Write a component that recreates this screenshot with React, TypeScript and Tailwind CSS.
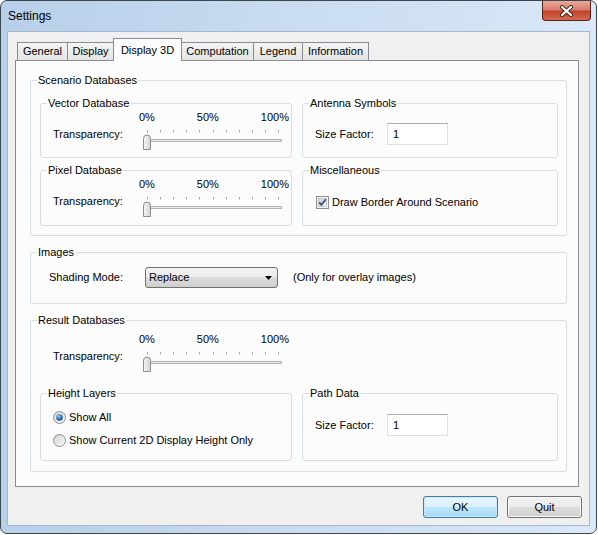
import type { ReactNode } from 'react'

const TICKS = Array.from({ length: 11 }, (_, i) => Math.round(8 + i * 13.1) + 0.5)

const TABS = [
  { label: 'General', w: 'w-[50px] border-l' },
  { label: 'Display', w: 'w-[46px] border-l' },
  { label: 'Display 3D', w: '', active: true },
  { label: 'Computation', w: 'w-[71px]' },
  { label: 'Legend', w: 'w-[49px] border-l' },
  { label: 'Information', w: 'w-[67px] border-x' },
]

function Group({ title, className = '', children }: { title: string; className?: string; children?: ReactNode }) {
  return (
    <fieldset className={`min-w-0 rounded-[3px] border border-[#d5dfe5] ${className}`}>
      <legend className="ml-[6px] px-px leading-[14px]">{title}</legend>
      {children}
    </fieldset>
  )
}

function Slider() {
  return (
    <div className="w-[150px]">
      <div className="flex h-[14px] justify-between leading-[14px]">
        <span>0%</span>
        <span>50%</span>
        <span>100%</span>
      </div>
      <svg width="150" height="28" viewBox="0 0 150 28" className="block">
        <defs>
          <linearGradient id="thumbFill" x1="0" y1="0" x2="1" y2="0">
            <stop offset="0" stopColor="#f6f6f6" />
            <stop offset="1" stopColor="#d4d4d4" />
          </linearGradient>
        </defs>
        {TICKS.map((x) => (
          <line key={x} x1={x} x2={x} y1="6" y2="8.5" stroke="#a8a8a8" />
        ))}
        <rect x="4.5" y="15.5" width="138" height="2" fill="#ececec" stroke="#b3b3b3" />
        <path d="M4.5 25.5 V14.5 A3.5 3.5 0 0 1 11.5 14.5 V25.5 Z" fill="url(#thumbFill)" stroke="#8c8c8c" />
      </svg>
    </div>
  )
}

function TextBox({ value }: { value: string }) {
  return (
    <div className="flex h-[22px] w-[61px] items-center border border-[#dbdfe6] border-t-[#abadb3] bg-white pl-[5px]">
      {value}
    </div>
  )
}

function Transparency({ pad }: { pad: string }) {
  return (
    <div className={`flex ${pad}`}>
      <span className="mt-[17px] w-[86px] leading-[14px]">Transparency:</span>
      <Slider />
    </div>
  )
}

function Checkbox() {
  return (
    <svg width="13" height="13" viewBox="0 0 13 13" className="block shrink-0">
      <defs>
        <linearGradient id="cbFill" x1="0" y1="0" x2="1" y2="1">
          <stop offset="0" stopColor="#cbcfd5" />
          <stop offset="1" stopColor="#f7f7f7" />
        </linearGradient>
      </defs>
      <rect x="0.5" y="0.5" width="12" height="12" fill="#f4f4f4" stroke="#8e8f8f" />
      <rect x="2.5" y="2.5" width="8" height="8" fill="url(#cbFill)" stroke="#aeb3b9" strokeWidth="0.6" />
      <path d="M3.2 6.4 L5.4 8.9 L9.8 3.2" fill="none" stroke="#3d4f7c" strokeWidth="1.8" />
    </svg>
  )
}

function Radio({ checked }: { checked?: boolean }) {
  return (
    <svg width="13" height="13" viewBox="0 0 13 13" className="block shrink-0">
      <defs>
        <linearGradient id="rdFill" x1="0" y1="0" x2="1" y2="1">
          <stop offset="0" stopColor="#cfd2d6" />
          <stop offset="1" stopColor="#f8f8f8" />
        </linearGradient>
        <radialGradient id="rdDot" cx="0.4" cy="0.35" r="0.7">
          <stop offset="0" stopColor="#a3d5f7" />
          <stop offset="0.5" stopColor="#2f84c8" />
          <stop offset="1" stopColor="#0d3f73" />
        </radialGradient>
      </defs>
      <circle cx="6.5" cy="6.5" r="6" fill="url(#rdFill)" stroke="#8e8f8f" />
      {checked && <circle cx="6.5" cy="6.5" r="3.2" fill="url(#rdDot)" />}
    </svg>
  )
}

function CloseButton() {
  return (
    <div className="mr-[5px] flex h-[20px] w-[49px] items-center justify-center rounded-b-[4px] border border-t-0 border-[#5b2216] bg-[linear-gradient(#e9a99b,#d7806f_45%,#c4432a_55%,#d26a55)]">
      <svg width="15" height="12" viewBox="0 0 15 12">
        <path d="M3 2 L12 10 M12 2 L3 10" stroke="#3a2620" strokeWidth="4" strokeLinecap="round" />
        <path d="M3 2 L12 10 M12 2 L3 10" stroke="#ffffff" strokeWidth="2.2" strokeLinecap="round" />
      </svg>
    </div>
  )
}

export default function App() {
  return (
    <div className="h-[535px] w-[598px] bg-white font-['Liberation_Sans',Arial,sans-serif] text-[11px] text-black">
      <div className="flex h-[534px] w-[597px] flex-col rounded-[7px] border border-[#3c4650] bg-[linear-gradient(90deg,#b7cfe9,#c9dcf1_50%,#dae8f7)]">
        {/* title bar */}
        <div className="flex h-[30px] justify-between">
          <span className="self-center pl-[7px] text-[12px]">Settings</span>
          <CloseButton />
        </div>

        {/* client */}
        <div className="mx-[6px] h-[495px] border border-[#a3b8cf] bg-[#f0f0f0]">
          <div className="ml-[9px] mt-[6px] flex h-[22px] items-end">
            {TABS.map((t) =>
              t.active ? (
                <div
                  key={t.label}
                  className="relative z-10 -mb-px flex h-[23px] w-[69px] justify-center border-x border-t border-[#898c95] bg-[#fcfcfc] pt-[4px] leading-[14px]"
                >
                  {t.label}
                </div>
              ) : (
                <div
                  key={t.label}
                  className={`flex h-[18px] items-center justify-center border-t border-[#898c95] bg-[linear-gradient(#f4f4f4,#e4e4e4)] ${t.w}`}
                >
                  {t.label}
                </div>
              ),
            )}
          </div>

          {/* tab page */}
          <div className="ml-[7px] flex h-[427px] w-[564px] flex-col gap-[9px] border border-[#898c95] bg-[#fcfcfc] pl-[14px] pt-[12px]">
            <Group title="Scenario Databases" className="h-[163px] w-[537px]">
              <div className="ml-[9px] mt-[9px] grid grid-cols-[252px_256px] gap-x-[10px] gap-y-[5px]">
                <Group title="Vector Database" className="h-[62px]">
                  <Transparency pad="pl-[12px]" />
                </Group>
                <Group title="Antenna Symbols" className="h-[62px]">
                  <div className="mt-[13px] flex items-center pl-[12px]">
                    <span className="w-[72px]">Size Factor:</span>
                    <TextBox value="1" />
                  </div>
                </Group>
                <Group title="Pixel Database" className="h-[63px]">
                  <Transparency pad="pl-[12px]" />
                </Group>
                <Group title="Miscellaneous" className="h-[63px]">
                  <div className="mt-[18px] flex items-center gap-[3px] pl-[13px] leading-[14px]">
                    <Checkbox />
                    <span>Draw Border Around Scenario</span>
                  </div>
                </Group>
              </div>
            </Group>

            <Group title="Images" className="h-[59px] w-[537px]">
              <div className="mt-[8px] flex items-center pl-[18px]">
                <span className="w-[96px]">Shading Mode:</span>
                <div className="flex h-[21px] w-[133px] items-center justify-between rounded-[3px] border border-[#707070] bg-[linear-gradient(#f2f2f2,#ebebeb_50%,#dddddd_50%,#cfcfcf)] pl-[3px] pr-[5px]">
                  <span>Replace</span>
                  <svg width="7" height="4" viewBox="0 0 7 4">
                    <path d="M0 0 H7 L3.5 4 Z" fill="#000" />
                  </svg>
                </div>
                <span className="ml-[15px]">(Only for overlay images)</span>
              </div>
            </Group>

            <Group title="Result Databases" className="h-[159px] w-[537px]">
              <div className="mt-[5px]">
                <Transparency pad="pl-[22px]" />
              </div>
              <div className="ml-[9px] mt-[12px] grid grid-cols-[252px_256px] gap-x-[10px]">
                <Group title="Height Layers" className="h-[75px]">
                  <div className="mt-[9px] flex flex-col gap-[7px] pl-[12px]">
                    <div className="flex h-[16px] items-center gap-[3px]">
                      <Radio checked />
                      <span>Show All</span>
                    </div>
                    <div className="flex h-[16px] items-center gap-[3px]">
                      <Radio />
                      <span>Show Current 2D Display Height Only</span>
                    </div>
                  </div>
                </Group>
                <Group title="Path Data" className="h-[75px]">
                  <div className="mt-[14px] flex items-center pl-[12px]">
                    <span className="w-[72px]">Size Factor:</span>
                    <TextBox value="1" />
                  </div>
                </Group>
              </div>
            </Group>
          </div>

          {/* buttons */}
          <div className="mt-[9px] flex justify-end gap-[9px] pr-[7px]">
            <button className="h-[22px] w-[75px] rounded-[3px] border border-[#3c7fb1] bg-[linear-gradient(#eaf6fd,#d9f0fc_50%,#bee6fd_50%,#a7d9f5)] shadow-[inset_0_0_0_1px_#cbe8f8]">
              OK
            </button>
            <button className="h-[22px] w-[75px] rounded-[3px] border border-[#707070] bg-[linear-gradient(#f2f2f2,#ebebeb_50%,#dddddd_50%,#cfcfcf)] shadow-[inset_0_0_0_1px_#fbfbfb]">
              Quit
            </button>
          </div>
        </div>
      </div>
    </div>
  )
}
